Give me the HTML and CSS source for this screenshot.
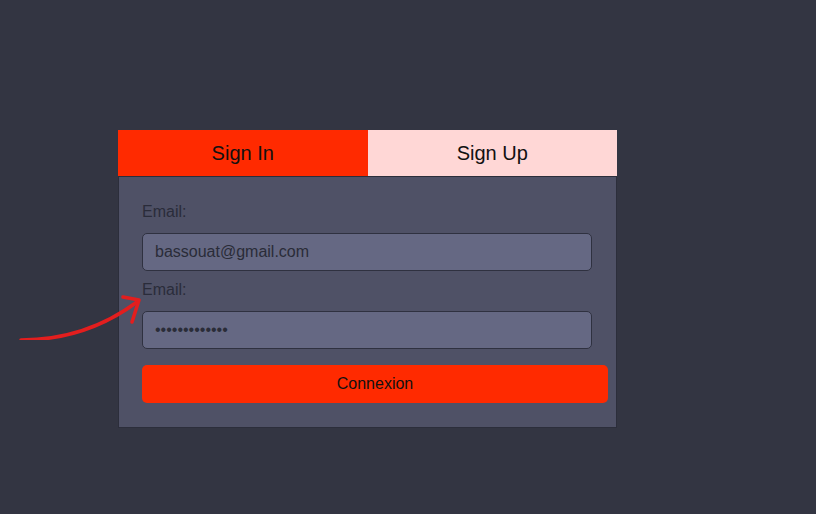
FILE: index.html
```html
<!DOCTYPE html>
<html>
<head>
<meta charset="utf-8">
<link rel="stylesheet" href="styles.css">
</head>
<body>
<div class="stage">
  <svg class="arrow" width="150" height="60" viewBox="0 0 150 60" xmlns="http://www.w3.org/2000/svg">
    <path d="M21 60 C 62 60, 102 48, 137 22" fill="none" stroke="#e31e1e" stroke-width="3.6" stroke-linecap="round"/>
    <path d="M123 17 L139 20 L132 42" fill="none" stroke="#e31e1e" stroke-width="3.6" stroke-linecap="round" stroke-linejoin="round"/>
  </svg>
  <div class="card">
    <div class="tabs">
      <div class="tab active">Sign In</div>
      <div class="tab">Sign Up</div>
    </div>
    <form class="form">
      <label class="label">Email:</label>
      <div class="input">bassouat@gmail.com</div>
      <label class="label">Email:</label>
      <div class="input pass">•••••••••••••</div>
      <div class="btn">Connexion</div>
    </form>
  </div>
</div>
</body>
</html>
```
FILE: styles.css
```css
html, body {
  margin: 0;
  padding: 0;
  background: #333542;
  font-family: "Liberation Sans", Arial, sans-serif;
}
.stage {
  position: relative;
  width: 816px;
  height: 514px;
  padding-top: 130px;
  box-sizing: border-box;
}
.arrow {
  position: absolute;
  left: 0;
  top: 280px;
}
.card {
  margin-left: 118px;
  width: 497px;
  background: #4f5166;
  border: 1px solid #2c2e3b;
  border-top: none;
}
.tabs {
  display: flex;
  height: 47px;
  border-bottom: 1px solid #2c2e3b;
  box-sizing: border-box;
  margin-left: -1px;
  margin-right: -1px;
}
.tab {
  flex: 1;
  display: flex;
  align-items: center;
  justify-content: center;
  font-size: 20px;
  color: #111;
  background: #ffd7d6;
  padding-top: 1px;
}
.tab.active {
  background: #ff2a00;
}
.form {
  display: flex;
  flex-direction: column;
  padding: 26px 0 24px 23px;
  margin: 0;
}
.label {
  font-size: 16px;
  line-height: 18px;
  color: #2a2c3a;
  height: 18px;
  margin-bottom: 12px;
}
.input {
  width: 450px;
  height: 38px;
  box-sizing: border-box;
  background: #656883;
  border: 1px solid #2f3140;
  border-radius: 5px;
  padding: 0 12px;
  font-size: 16px;
  color: #2a2c38;
  display: flex;
  align-items: center;
  margin-bottom: 10px;
}
.input.pass {
  font-size: 16px;
  margin-bottom: 16px;
}
.btn {
  width: 466px;
  height: 38px;
  background: #ff2a00;
  border-radius: 5px;
  display: flex;
  align-items: center;
  justify-content: center;
  font-size: 16px;
  color: #111;
}
```
